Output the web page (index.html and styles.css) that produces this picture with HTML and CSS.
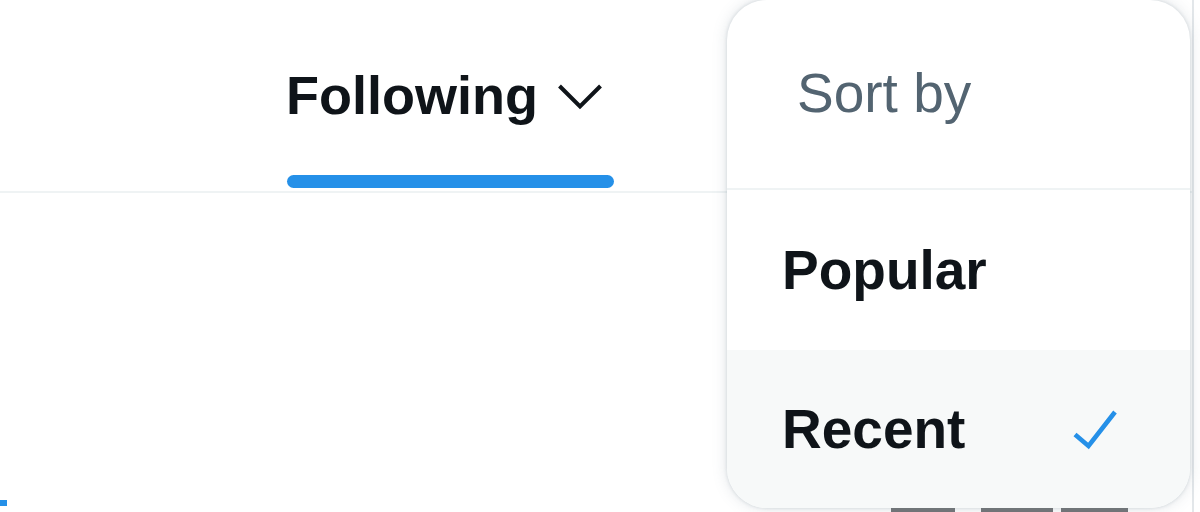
FILE: index.html
```html
<!DOCTYPE html>
<html lang="en">
<head>
<meta charset="utf-8">
<title>Following – Sort by</title>
<link rel="stylesheet" href="styles.css">
</head>
<body>
<div class="page">
  <header class="tabs">
    <div class="tab">
      <div class="tab-label">
        <span class="tab-text">Following</span>
        <svg class="chevron" width="46" height="27" viewBox="0 0 46 27" aria-hidden="true">
          <polyline points="2.5,3 23,23.5 43.5,3" fill="none" stroke="#0f1419" stroke-width="4" stroke-linejoin="miter"/>
        </svg>
      </div>
      <div class="tab-indicator"></div>
    </div>
  </header>
  <main class="feed">
    <div class="feed-row">
      <span class="feed-mark"></span>
      <div class="feed-blocks">
        <span class="block b1"></span>
        <span class="block b2"></span>
        <span class="block b3"></span>
      </div>
    </div>
  </main>
</div>

<div class="menu" role="menu">
  <div class="menu-head">Sort by</div>
  <div class="menu-item" role="menuitem">Popular</div>
  <div class="menu-item selected" role="menuitem">
    <span>Recent</span>
    <svg class="check" width="46" height="42" viewBox="0 0 46 42" aria-hidden="true">
      <polyline points="3,26.5 16.5,38 43,4" fill="none" stroke="#2590e8" stroke-width="4.6" stroke-linejoin="miter"/>
    </svg>
  </div>
</div>
</body>
</html>
```

FILE: styles.css
```css
* { box-sizing: border-box; }

html, body {
  margin: 0;
  padding: 0;
  width: 1200px;
  height: 512px;
  overflow: hidden;
  background: #ffffff;
  font-family: "Liberation Sans", Arial, sans-serif;
  color: #0f1419;
}

.page {
  width: 1194px;
  height: 512px;
  border-right: 2px solid #e3e7ea;
  display: flex;
  flex-direction: column;
}

.tabs {
  height: 193px;
  border-bottom: 2px solid #eff3f4;
  display: flex;
  padding-left: 286px;
}

.tab {
  display: flex;
  flex-direction: column;
  padding-top: 65px;
}

.tab-label {
  display: flex;
  align-items: flex-start;
  height: 60px;
  gap: 19px;
}

.tab-text {
  font-size: 54px;
  font-weight: 700;
  line-height: 60px;
}

.chevron {
  display: block;
  margin-top: 18px;
}

.tab-indicator {
  margin-top: 50px;
  margin-left: 1px;
  width: 327px;
  height: 13px;
  border-radius: 7px;
  background: #2590e8;
}

.feed {
  flex: 1;
  display: flex;
  flex-direction: column;
  justify-content: flex-end;
}

.feed-row {
  height: 12px;
  display: flex;
  align-items: flex-start;
  padding-right: 64px;
}

.feed-mark {
  width: 7px;
  height: 6px;
  background: #2590e8;
}

.feed-blocks {
  margin-left: auto;
  margin-top: 8px;
  display: flex;
}

.block {
  height: 4px;
  background: #747578;
}

.b1 { width: 64px; }
.b2 { width: 72px; margin-left: 26px; }
.b3 { width: 67px; margin-left: 8px; }

.menu {
  position: absolute;
  top: 0;
  left: 727px;
  width: 463px;
  height: 508px;
  background: #ffffff;
  border-radius: 40px;
  overflow: hidden;
  box-shadow: 0 0 15px rgba(101, 119, 134, 0.2), 0 0 3px 1px rgba(101, 119, 134, 0.15);
  display: flex;
  flex-direction: column;
}

.menu-head {
  height: 190px;
  border-bottom: 2px solid #eff3f4;
  display: flex;
  align-items: center;
  padding-left: 70px;
  padding-bottom: 2px;
  font-size: 55px;
  font-weight: 400;
  color: #536471;
}

.menu-item {
  height: 160px;
  display: flex;
  align-items: center;
  justify-content: space-between;
  padding-left: 55px;
  padding-right: 72px;
  font-size: 55px;
  font-weight: 700;
  color: #0f1419;
}

.menu-item.selected {
  flex: 1;
  background: #f7f9f9;
}

.check {
  display: block;
  margin-top: 0;
}
```
